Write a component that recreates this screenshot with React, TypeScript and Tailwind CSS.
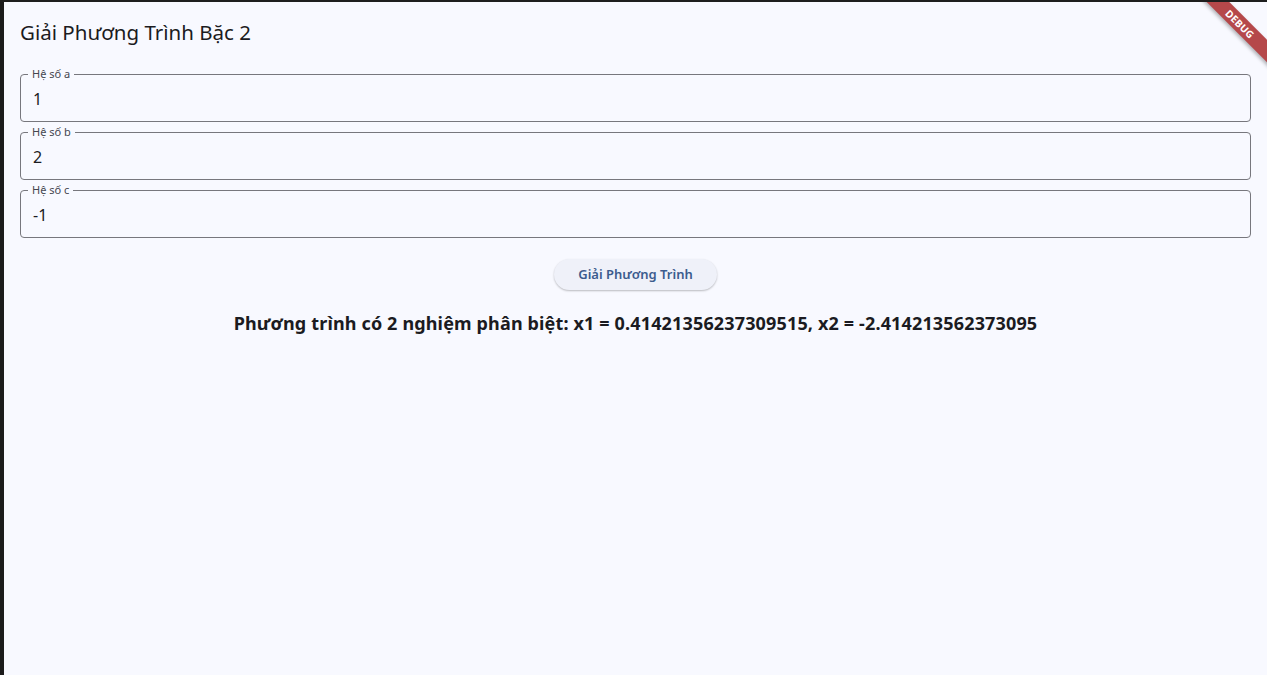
import { useState } from 'react';

function Field({ label, value }: { label: string; value: string }) {
	return (
		<fieldset className="border border-[#77777d] rounded-[4px] px-3 pb-[10px] h-[54px]">
			<legend className="-ml-[5px] px-1 text-[11px] leading-[12px] text-[#45464f]">{label}</legend>
			<div className="text-[16px] leading-[22px] text-[#1b1b21] pt-[8px]">{value}</div>
		</fieldset>
	);
}

export default function App() {
	const [a] = useState('1');
	const [b] = useState('2');
	const [c] = useState('-1');
	return (
		<main
			className="h-[675px] w-full flex bg-[#1e1e1e] pt-[2px] overflow-hidden"
			style={{ fontFamily: '"Noto Sans", "Open Sans", sans-serif' }}
		>
			<div className="w-[4px] shrink-0 bg-[#1b1b1b]" />
			<div className="relative flex-1 bg-[#f8f9ff] px-4 overflow-hidden">
				<h1 className="text-[20.5px] leading-[28px] pt-[16px] text-[#1b1b21] font-normal">Giải Phương Trình Bặc 2</h1>
				<div className="mt-[22px] flex flex-col gap-[4px]">
					<Field label="Hệ số a" value={a} />
					<Field label="Hệ số b" value={b} />
					<Field label="Hệ số c" value={c} />
				</div>
				<div className="flex justify-center mt-[21px]">
					<button className="h-[31px] w-[163px] rounded-full bg-[#eff1f9] text-[#3c5c8e] text-[13px] font-semibold shadow-[0_1px_2px_rgba(0,0,0,0.25)]">
						Giải Phương Trình
					</button>
				</div>
				<p className="mt-[20px] text-center text-[18px] leading-[26px] tracking-[0.15px] font-bold text-[#1b1b21]">
					Phương trình có 2 nghiệm phân biệt: x1 = 0.41421356237309515, x2 = -2.414213562373095
				</p>
				<div className="absolute top-[14px] right-[-33px] w-[120px] h-[16px] rotate-45 bg-[#b5484a] text-white text-[10px] font-bold leading-[16px] text-center tracking-wide shadow-[0_2px_4px_rgba(0,0,0,0.3)]">
					DEBUG
				</div>
			</div>
		</main>
	);
}
